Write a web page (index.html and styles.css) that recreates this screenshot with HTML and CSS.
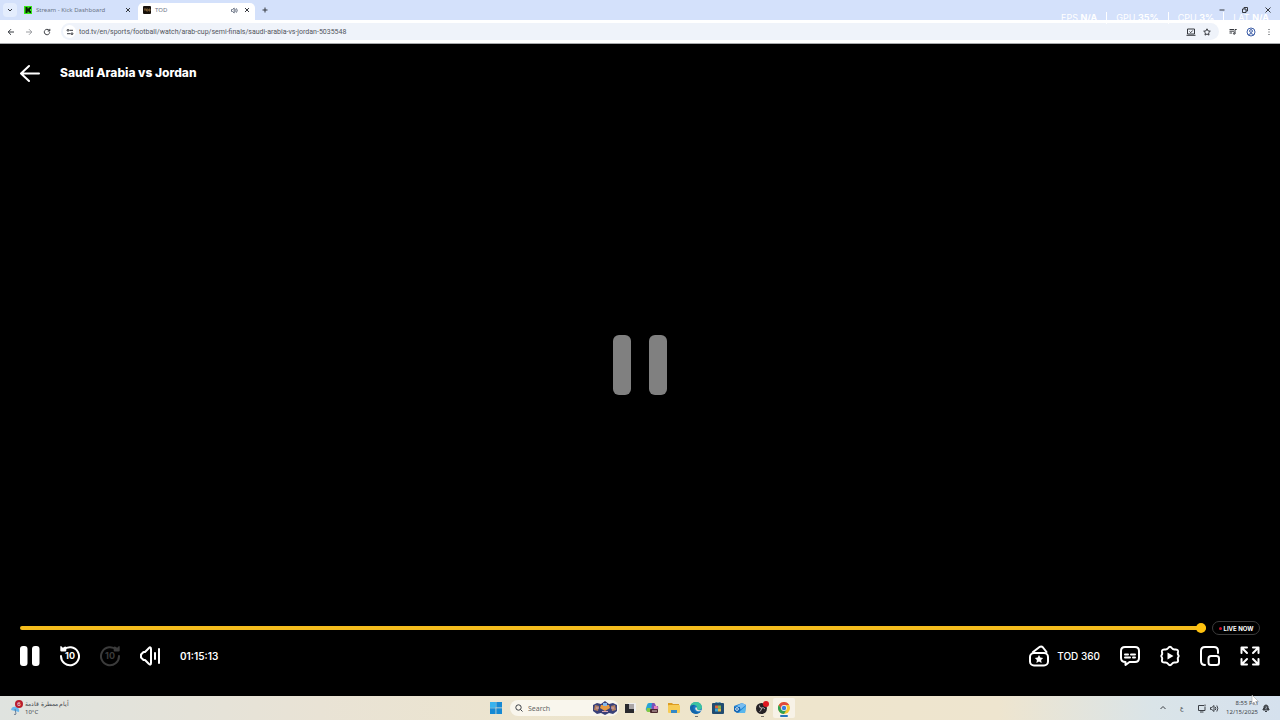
FILE: index.html
```html
<!DOCTYPE html>
<html lang="en">
  <head>
    <meta charset="UTF-8" />
    <meta name="viewport" content="width=device-width, initial-scale=1.0" />
    <title>TOD</title>
    <link rel="stylesheet" href="styles.css" />
  </head>
  <body>
    <!-- Browser tabs -->
    <header class="browser">
      <div class="tab-strip">
        <button class="tab-search" aria-label="Search tabs">
          <svg width="6" height="6" viewBox="0 0 6 6"><path d="M1 2l2 2 2-2" /></svg>
        </button>
        <div class="tab">
          <svg class="favicon" width="8" height="8" viewBox="0 0 8 8">
            <rect width="8" height="8" fill="#35e91a" />
            <path d="M1.500 1h2v1.600h1V1.800h1V1H7v2H6v2h1v2H5.500v-.8h-1v-.8h-1V7h-2z" fill="#082006" />
          </svg>
          <span class="tab-title">Stream - Kick Dashboard</span>
          <button class="tab-close" aria-label="Close tab">
            <svg width="6" height="6" viewBox="0 0 6 6"><path d="M1 1l4 4M5 1L1 5" /></svg>
          </button>
        </div>
        <div class="tab tab-active">
          <svg class="favicon" width="8" height="8" viewBox="0 0 8 8">
            <rect width="8" height="8" rx="1" fill="#17110b" />
            <path d="M1 3h2M2 3v2M3.500 3h1.500v2H3.500zM6 3v2h1V3z" fill="none" stroke="#9b7642" stroke-width=".7" />
          </svg>
          <span class="tab-title">TOD</span>
          <svg class="tab-audio" width="7" height="7" viewBox="0 0 7 7">
            <path d="M.5 2.500h1L3.200 1v5L1.500 4.500h-1zM4.300 2.300q1 1.200 0 2.400M5.300 1.300q2 2.200 0 4.400" />
          </svg>
          <button class="tab-close" aria-label="Close tab">
            <svg width="6" height="6" viewBox="0 0 6 6"><path d="M1 1l4 4M5 1L1 5" /></svg>
          </button>
        </div>
        <button class="new-tab" aria-label="New tab">
          <svg width="6" height="6" viewBox="0 0 6 6"><path d="M3 .5v5M.5 3h5" /></svg>
        </button>
        <div class="window-buttons">
          <button aria-label="Minimize">
            <svg width="6" height="6" viewBox="0 0 6 6"><path d="M.5 3h5" /></svg>
          </button>
          <button aria-label="Restore">
            <svg width="6" height="6" viewBox="0 0 6 6"><path d="M.5 2h3.500v3.500H.5zM2 2V.5h3.500V4H4" /></svg>
          </button>
          <button aria-label="Close">
            <svg width="6" height="6" viewBox="0 0 6 6"><path d="M.5.5l5 5M5.500.5l-5 5" /></svg>
          </button>
        </div>
        <!-- Performance overlay -->
        <div class="stats">
          <span>FPS <b>N/A</b></span>
          <span>GPU <b>35%</b></span>
          <span>CPU <b>3%</b></span>
          <span>LAT <b>N/A</b></span>
        </div>
      </div>

      <!-- Address bar -->
      <div class="toolbar">
        <button aria-label="Back">
          <svg width="8" height="8" viewBox="0 0 8 8"><path d="M7 4H1.200M4 1.200L1.200 4 4 6.800" /></svg>
        </button>
        <button class="faded" aria-label="Forward">
          <svg width="8" height="8" viewBox="0 0 8 8"><path d="M1 4h5.800M4 1.200L6.800 4 4 6.800" /></svg>
        </button>
        <button aria-label="Reload">
          <svg width="8" height="8" viewBox="0 0 8 8"><path d="M6.700 4.300A2.700 2.700 0 1 1 6 2.200L6.800 3M6.800.9V3H4.700" /></svg>
        </button>
        <div class="address">
          <button class="site-info" aria-label="Site information">
            <svg width="8" height="8" viewBox="0 0 8 8">
              <path d="M3.500 2.300H7M1 5.700h3.500" />
              <circle cx="2" cy="2.300" r=".9" />
              <circle cx="6" cy="5.700" r=".9" />
            </svg>
          </button>
          <input class="url" type="text" aria-label="Address" value="tod.tv/en/sports/football/watch/arab-cup/semi-finals/saudi-arabia-vs-jordan-5035548" />
          <button aria-label="Install app">
            <svg width="10" height="8" viewBox="0 0 10 8"><path d="M1.500 1h7v5h-7zM.5 7.300h9M3.500 3.500l1.200 1.200L6.700 2.500" /></svg>
          </button>
          <button aria-label="Bookmark">
            <svg width="8" height="8" viewBox="0 0 8 8"><path d="M4 .8l1 2.100 2.300.3-1.700 1.600.4 2.300L4 6l-2 1.100.4-2.300L.7 3.200 3 2.900z" /></svg>
          </button>
        </div>
        <div class="toolbar-end">
          <button aria-label="Media controls">
            <svg width="8" height="8" viewBox="0 0 8 8">
              <path d="M.5 1.500h4.500M.5 3.200h4.500M.5 5h2.500M6 5.500v-4h1.700" />
              <circle cx="5.200" cy="5.500" r=".8" />
            </svg>
          </button>
          <button class="profile-button" aria-label="Profile">
            <svg width="10" height="10" viewBox="0 0 10 10">
              <circle cx="5" cy="5" r="4" />
              <circle cx="5" cy="4" r="1.400" />
              <path d="M2.200 7.700q2.800-2.400 5.600 0" />
            </svg>
          </button>
          <button aria-label="Menu">
            <svg width="8" height="8" viewBox="0 0 8 8"><path d="M4 1v1M4 3.500v1M4 6v1" /></svg>
          </button>
        </div>
      </div>
    </header>

    <!-- Video player -->
    <main class="player">
      <div class="player-header">
        <a class="back-link" href="#" aria-label="Back">
          <svg width="20" height="20" viewBox="0 0 20 20"><path d="M19 10.500H1M9 3L1 10.500 9 18" /></svg>
        </a>
        <h1>Saudi Arabia vs Jordan</h1>
      </div>

      <div class="player-center">
        <svg width="56" height="62" viewBox="0 0 56 62">
          <rect x="1" y="1" width="18" height="60" rx="6" />
          <rect x="37" y="1" width="18" height="60" rx="6" />
        </svg>
      </div>

      <div class="timeline">
        <input class="seek" type="range" min="0" max="100" value="100" aria-label="Seek" />
        <button class="live"><span class="live-dot"></span>LIVE NOW</button>
      </div>

      <div class="controls">
        <button aria-label="Pause">
          <svg class="solid" width="20" height="22" viewBox="0 0 20 22">
            <rect x="0" y="1" width="7.500" height="20" rx="3" />
            <rect x="12" y="1" width="7.500" height="20" rx="3" />
          </svg>
        </button>
        <button aria-label="Back 10 seconds">
          <svg width="20" height="22" viewBox="0 0 20 22">
            <path d="M3.500 5A9 9 0 1 1 1 11" />
            <path class="fill" d="M.3 1.500q.6-1 1.300 0l1.200 1.200L5 1.500q1.300 0 1.300 1.200V5.500q0 1-1 1H1.500q-1.200 0-1.200-1z" />
            <text x="10" y="14">10</text>
          </svg>
        </button>
        <button class="disabled" aria-label="Forward 10 seconds" disabled>
          <svg width="20" height="22" viewBox="0 0 20 22">
            <path d="M16.500 5A9 9 0 1 0 19 11" />
            <path class="fill" d="M19.700 1.500q-.6-1-1.300 0l-1.200 1.200L15 1.500q-1.300 0-1.300 1.200V5.500q0 1 1 1h3.800q1.200 0 1.200-1z" />
            <text x="10" y="14">10</text>
          </svg>
        </button>
        <button aria-label="Volume">
          <svg width="20" height="22" viewBox="0 0 20 22">
            <path d="M5 7L8.500 3.500Q11 1 11 4v14q0 3-2.500.5L5 15H3.500L1 12.500v-3L3.500 7zM15 8v6M19 4v14" />
          </svg>
        </button>
        <span class="time">01:15:13</span>

        <button class="tod360">
          <svg width="22" height="22" viewBox="0 0 22 22">
            <rect x="2" y="8" width="18" height="12.500" rx="4" />
            <path d="M5 7l6.500-5q2-1 3.500.5L18.500 7" />
            <path class="fill" d="M11 10l1.300 2.600 2.900.4-2.100 2 .5 2.900-2.600-1.400-2.600 1.400.5-2.900-2.100-2 2.900-.4z" />
          </svg>
          TOD 360
        </button>
        <button aria-label="Subtitles">
          <svg width="20" height="22" viewBox="0 0 20 22">
            <path d="M5 2h10q4 0 4 4v7q0 4-4 4H9.500L5.500 20v-3Q1 17 1 13V6q0-4 4-4z" />
            <path d="M5 9.500h3M11 9.500h4M5 12.500h5M13 12.500h2" />
          </svg>
        </button>
        <button aria-label="Settings">
          <svg width="20" height="22" viewBox="0 0 20 22">
            <path d="M10 1.800q1 0 1.800 1.200 1.200 1.700 3 1.500 3.700-.3 3.200 2.500-.5 2 .3 3 .7 1 0 2-.8 1-.3 3 .5 2.800-3.200 2.500-1.800-.2-3 1.500-.8 1.200-1.800 1.200T8.200 19q-1.200-1.700-3-1.500Q1.500 17.800 2 15q.5-2-.3-3-.7-1 0-2 .8-1 .3-3-.5-2.800 3.200-2.500 1.800.2 3-1.500.8-1.200 1.800-1.200z" />
            <path class="fill" d="M7.500 7.500v7l6-3.500z" />
          </svg>
        </button>
        <button aria-label="Picture in picture">
          <svg width="20" height="22" viewBox="0 0 20 22">
            <path d="M5 20Q1 20 1 16V6q0-4 4-4h9q4 0 4 4v2" />
            <rect x="8.500" y="11" width="10.500" height="9" rx="2.500" />
          </svg>
        </button>
        <button aria-label="Fullscreen">
          <svg width="20" height="22" viewBox="0 0 20 22">
            <path d="M1.500 8V2.500H7M13 2.500h5.500V8M18.500 14v5.500H13M7 19.500H1.500V14M2 3l5 5M18 3l-5 5M18 19l-5-5M2 19l5-5" />
          </svg>
        </button>
      </div>
    </main>

    <!-- Windows taskbar -->
    <footer class="taskbar">
      <button class="weather">
        <svg width="14" height="16" viewBox="0 0 14 16">
          <path d="M1 10q1-4 5-3t3 5z" fill="#68b7ee" />
          <path d="M5 9l1 5q-1 1.500-2 0" fill="none" stroke="#566b85" stroke-width=".8" />
          <circle cx="9" cy="4" r="4" fill="#b91d2c" />
          <text x="9" y="6">6</text>
        </svg>
        <span class="weather-text">
          <span lang="ar" dir="rtl">أيام ممطرة قادمة</span>
          <span>10°C</span>
        </span>
      </button>

      <nav class="apps">
        <button aria-label="Start">
          <svg width="12" height="12" viewBox="0 0 12 12">
            <path d="M0 0h5.600v5.600H0zM6.300 0H12v5.600H6.300zM0 6.300h5.600V12H0zM6.300 6.300H12V12H6.300z" fill="#1689d4" />
            <path d="M0 0h5.600v5.600H0z" fill="#37b3ee" />
          </svg>
        </button>
        <label class="search">
          <svg class="search-icon" width="8" height="8" viewBox="0 0 8 8">
            <circle cx="3.500" cy="3.500" r="2.700" />
            <path d="M5.500 5.500L7.500 7.500" />
          </svg>
          <input type="search" placeholder="Search" aria-label="Search" />
          <svg width="24" height="14" viewBox="0 0 24 14">
            <path d="M0 4l4-2 4 1 4-3 4 3 4-1 4 2v6l-4 3-4-1-4 2-4-2-4 1-4-3z" fill="#394078" />
            <path d="M2 4l4 1-1 5-4-1zM22 4l-4 1 1 5 4-1z" fill="#b28062" />
            <path d="M8 4h8l1 3-5 3-5-3z" fill="#e59a43" />
            <path d="M10 2h4v3h-4z" fill="#82b7ea" />
            <path d="M3 7h3M18 7h3M9 10.500h6" stroke="#d8a6b6" />
          </svg>
        </label>
        <button aria-label="Task view">
          <svg width="12" height="12" viewBox="0 0 12 12">
            <rect x="4" y="1" width="8" height="8" fill="#eee" />
            <path d="M1 2h4v5h5v4H1z" fill="#29292c" />
            <path d="M5 2h5v5H5z" fill="#aaa5a5" />
          </svg>
        </button>
        <button aria-label="Copilot">
          <svg width="14" height="14" viewBox="0 0 14 14">
            <path d="M4 2h4L6 10H3Q0 10 1 7l1-3q.5-2 2-2z" fill="#27a3d5" />
            <path d="M2 7h4l-1 4H3Q.5 11 2 7z" fill="#81c944" />
            <path d="M7 2h2q1 0 1.500 2l.5 1h2q1 4-2 6H6z" fill="#7950b8" />
            <path d="M9 5h3q1.500 1 0 4L9 10z" fill="#e780b7" />
            <rect x="5" y="8" width="8" height="4" rx="1" fill="#4c292f" />
            <path d="M7 10h5" stroke="#d3bec0" />
          </svg>
        </button>
        <button aria-label="File Explorer">
          <svg width="12" height="12" viewBox="0 0 12 12">
            <path d="M0 1h4l1 1h6v3H0z" fill="#dc9c22" />
            <rect y="3" width="12" height="8" rx="1" fill="#f7cb54" />
            <path d="M3 8h6v3H3z" fill="#3488c7" />
          </svg>
        </button>
        <button class="running" aria-label="Edge">
          <svg width="12" height="12" viewBox="0 0 12 12">
            <circle cx="6" cy="6" r="6" fill="#1678c9" />
            <path d="M0 5Q1 0 6 0q5 0 6 5 0 3-4 3-2 0-1-2Q7 3 4 3 1 3 0 5z" fill="#3cc4a0" />
            <path d="M0 5q2-3 5-2-3 2-1 5 2 3 6 2Q7 13 3 11 0 9 0 5z" fill="#1464a6" />
            <path d="M6 5q-2 2 1 4 3 1 5-1-4 1-5-1 0-1 0-1z" fill="#e6e5d9" />
          </svg>
        </button>
        <button aria-label="Microsoft Store">
          <svg width="12" height="12" viewBox="0 0 12 12">
            <rect x="0" y="1" width="12" height="11" rx="1" fill="#204b70" />
            <path d="M4 1V0h4v1" fill="none" stroke="#287bad" />
            <path d="M3 3.500h3v3H3z" fill="#dd6538" />
            <path d="M6 3.500h3v3H6z" fill="#87b347" />
            <path d="M3 6.500h3v3H3z" fill="#38a2d0" />
            <path d="M6 6.500h3v3H6z" fill="#e3b640" />
          </svg>
        </button>
        <button aria-label="Outlook">
          <svg width="12" height="12" viewBox="0 0 12 12">
            <path d="M0 4l8-3 4 2-1 8H4L0 8z" fill="#2585d4" />
            <path d="M3 4l5-3 4 2-5 4z" fill="#78bdf0" />
            <path d="M4 11l8-7-1 7z" fill="#58b7ed" />
            <path d="M0 5h6v4l-3 2-3-2z" fill="#1667b3" />
            <circle cx="3" cy="7" r="1.400" fill="none" stroke="#fff" stroke-width=".8" />
          </svg>
        </button>
        <button class="running" aria-label="OBS Studio">
          <svg width="14" height="14" viewBox="0 0 14 14">
            <circle cx="6.500" cy="7.500" r="5.500" fill="#242124" />
            <path d="M6.500 7Q4 7 4.500 4.500M6.500 7q2-1 3.500 1M6.500 7q0 3-2 3.500" fill="none" stroke="#b9b4b4" />
            <circle cx="11" cy="3" r="3" fill="#df1720" />
          </svg>
        </button>
        <button class="running current" aria-label="Chrome">
          <svg width="12" height="12" viewBox="0 0 12 12">
            <circle cx="6" cy="6" r="6" fill="#f4c52f" />
            <path d="M.8 3A6 6 0 0 1 11.200 3H6L3.400 7.500z" fill="#df493c" />
            <path d="M.8 3A6 6 0 0 0 6 12l2.600-4.500H3.400z" fill="#2fa052" />
            <circle cx="6" cy="6" r="2.900" fill="#f5f5f5" />
            <circle cx="6" cy="6" r="2.200" fill="#347de0" />
          </svg>
        </button>
      </nav>

      <div class="tray">
        <button aria-label="Show hidden icons">
          <svg width="8" height="8" viewBox="0 0 8 8"><path d="M1.500 5L4 2.500 6.500 5" /></svg>
        </button>
        <button class="language" lang="ar" aria-label="Input language">ع</button>
        <button class="system" aria-label="Network and volume">
          <svg width="10" height="9" viewBox="0 0 10 9"><path d="M7 1.500H1.500v5H8V3M3 8h3.500M8 .5v2" /></svg>
          <svg width="9" height="9" viewBox="0 0 9 9"><path d="M.5 3.500h1.300L4 1.500v6l-2.200-2H.5zM5.300 3q1 1.500 0 3M6.800 1.500q2 3 0 6" /></svg>
        </button>
        <button class="clock">
          <span>8:55 PM</span>
          <span>12/15/2025</span>
        </button>
        <button class="notifications" aria-label="Notifications">
          <svg width="8" height="8" viewBox="0 0 8 8">
            <path class="bell" d="M1 6V5l1-1V2.500Q2.500 1 4 1t2 1.500V4l1 1v1zM3 7.500h2" />
            <path class="snooze" d="M3.300 3H5L3.300 4.900H5" />
          </svg>
        </button>
      </div>
      <svg class="cursor" width="8" height="12" viewBox="0 0 8 12"><path d="M1 1v9l2-2 1.500 3L6 10.400 4.600 7.500H7.500z" /></svg>
    </footer>
  </body>
</html>
```
FILE: styles.css
```css
* {
  box-sizing: border-box;
}

body {
  margin: 0;
  min-height: 100vh;
  display: flex;
  flex-direction: column;
  background: #000;
  font-family: 'Noto Sans', 'Open Sans', sans-serif;
}

button {
  display: flex;
  align-items: center;
  justify-content: center;
  padding: 0;
  border: 0;
  background: none;
  color: inherit;
  font: inherit;
  cursor: pointer;
}

svg {
  display: block;
  flex: none;
}

input {
  min-width: 0;
  padding: 0;
  border: 0;
  outline: 0;
  background: none;
  color: inherit;
  font: inherit;
}

/* Browser */
.browser {
  color: #35383e;
  font-size: 7px;
  border-bottom: 1px solid #a8aaad;
}

.browser button svg,
.tab-audio {
  fill: none;
  stroke: currentColor;
}

.tab-strip {
  position: relative;
  display: flex;
  align-items: center;
  height: 20px;
  padding: 0 4px 0 3px;
  background: #d4e1fb;
}

.tab-search {
  width: 14px;
  height: 14px;
  border-radius: 4px;
  background: #e4edfd;
}

.tab {
  display: flex;
  align-items: center;
  gap: 4px;
  width: 115px;
  height: 17px;
  margin-left: 4px;
  padding: 0 5px 0 3px;
  color: #6b7486;
  font-size: 6px;
}

.tab-active {
  align-self: flex-end;
  width: 117px;
  margin-left: 2px;
  padding: 0 5px 3px;
  border-radius: 5px 5px 0 0;
  background: #fff;
}

.tab-title {
  flex: 1;
  white-space: nowrap;
}

.tab-close,
.new-tab {
  color: #35383e;
}

.tab-close {
  margin-left: 2px;
}

.new-tab {
  margin-left: 7px;
}

.window-buttons {
  display: flex;
  gap: 17px;
  margin-left: auto;
  padding-right: 5px;
}

.stats {
  position: absolute;
  top: 12px;
  right: 11px;
  display: flex;
  color: #fff;
  font-family: Inter, sans-serif;
  font-size: 9px;
  line-height: 12px;
}

.stats span {
  padding-left: 9px;
}

.stats span + span {
  margin-left: 9px;
  border-left: 1px solid #fff;
}

.toolbar {
  display: flex;
  align-items: center;
  gap: 10px;
  height: 23px;
  padding: 0 7px;
  background: #fff;
}

.faded {
  color: #9b9da1;
}

.address {
  flex: 1;
  display: flex;
  align-items: center;
  gap: 7px;
  height: 17px;
  padding: 0 8px 0 2px;
  border-radius: 9px;
  background: #eff3fa;
}

.site-info {
  width: 13px;
  height: 13px;
  border-radius: 50%;
  background: #fff;
}

.url {
  flex: 1;
  height: 13px;
  margin-left: -4px;
  color: #51555c;
  font-family: Roboto, sans-serif;
}

.toolbar-end {
  display: flex;
  align-items: center;
  gap: 9px;
}

.profile-button {
  color: #3c5da7;
}

/* Player */
.player {
  flex: 1;
  display: flex;
  flex-direction: column;
  padding: 18px 20px 29px;
  color: #fff;
  font-family: Inter, sans-serif;
}

.player-header {
  display: flex;
  align-items: center;
  gap: 20px;
  height: 22px;
}

.player-header h1 {
  margin: 0;
  font-size: 12px;
  font-weight: 800;
  line-height: 20px;
}

.back-link {
  color: inherit;
}

.back-link svg,
.controls svg {
  fill: none;
  stroke: currentColor;
  stroke-width: 2;
  stroke-linecap: round;
  stroke-linejoin: round;
}

.player-center {
  flex: 1;
  display: flex;
  align-items: center;
  justify-content: center;
  padding-top: 25px;
}

.player-center svg {
  fill: #808080;
}

.timeline {
  display: flex;
  align-items: center;
  gap: 6px;
  height: 16px;
}

.seek {
  flex: 1;
  height: 10px;
  margin: 0;
  appearance: none;
}

.seek::-webkit-slider-runnable-track {
  height: 4px;
  border-radius: 2px;
  background: #f5bd1d;
}

.seek::-webkit-slider-thumb {
  appearance: none;
  width: 10px;
  height: 10px;
  margin-top: -3px;
  border-radius: 50%;
  background: #ffc20f;
}

.live {
  gap: 2px;
  width: 48px;
  height: 14px;
  border: 1px solid #3c3c3c;
  border-radius: 7px;
  font-size: 6px;
  font-weight: 700;
  white-space: nowrap;
}

.live-dot {
  width: 3px;
  height: 3px;
  border-radius: 50%;
  background: #d1142c;
}

.controls {
  display: flex;
  align-items: center;
  gap: 20px;
  height: 22px;
  margin-top: 9px;
  font-size: 10px;
}

.controls .solid,
.controls .fill {
  fill: currentColor;
  stroke: none;
}

.controls text {
  fill: currentColor;
  stroke: none;
  font-size: 9px;
  font-weight: 700;
  text-anchor: middle;
}

.disabled {
  color: #3b3b3b;
}

.time {
  font-weight: 600;
}

.tod360 {
  gap: 7px;
  margin-left: auto;
  font-weight: 500;
}

/* Taskbar */
.taskbar {
  position: relative;
  display: grid;
  grid-template-columns: 1fr auto 1fr;
  align-items: center;
  height: 24px;
  padding: 0 10px;
  background: linear-gradient(90deg, #dfe3df, #e9e3d5 25%, #eee5cb 50%, #eee5cf 78%, #dae4e8 90%, #d5e1ee);
  color: #41454b;
  font-size: 6px;
}

.weather {
  justify-self: start;
  gap: 1px;
}

.weather text {
  fill: #fff;
  text-anchor: middle;
}

.weather-text {
  display: flex;
  flex-direction: column;
  align-items: flex-start;
  line-height: 8px;
}

.apps {
  display: flex;
  align-items: center;
}

.apps button {
  position: relative;
  width: 22px;
  height: 20px;
  border-radius: 2px;
}

.apps .current {
  background: #f7f2e7;
}

.running::after {
  content: '';
  position: absolute;
  bottom: 1px;
  width: 3px;
  height: 1px;
  background: #77736b;
}

.current::after {
  width: 8px;
  height: 2px;
  border-radius: 1px;
  background: #2575bd;
}

.search {
  display: flex;
  align-items: center;
  gap: 5px;
  width: 109px;
  height: 16px;
  margin: 0 0 0 3px;
  padding: 0 2px 0 5px;
  border-radius: 8px;
  background: #f9f6ed;
  font-size: 7px;
}

.search input {
  flex: 1;
}

.search input::placeholder {
  color: #666;
}

.search-icon,
.tray svg {
  fill: none;
  stroke: #3c4046;
}

.tray {
  display: flex;
  align-items: center;
  justify-self: end;
}

.language {
  margin: 0 13px 0 13px;
}

.system {
  gap: 3px;
}

.clock {
  flex-direction: column;
  align-items: flex-end;
  margin-left: 7px;
  line-height: 9px;
}

.notifications {
  margin-left: 4px;
}

.tray .bell {
  fill: #3c4046;
}

.tray .snooze {
  stroke: #d5e1ee;
  stroke-width: 0.5;
}

.cursor {
  position: absolute;
  top: -2px;
  right: 21px;
  fill: #fff;
  stroke: #999;
  stroke-width: 0.5;
}
```
